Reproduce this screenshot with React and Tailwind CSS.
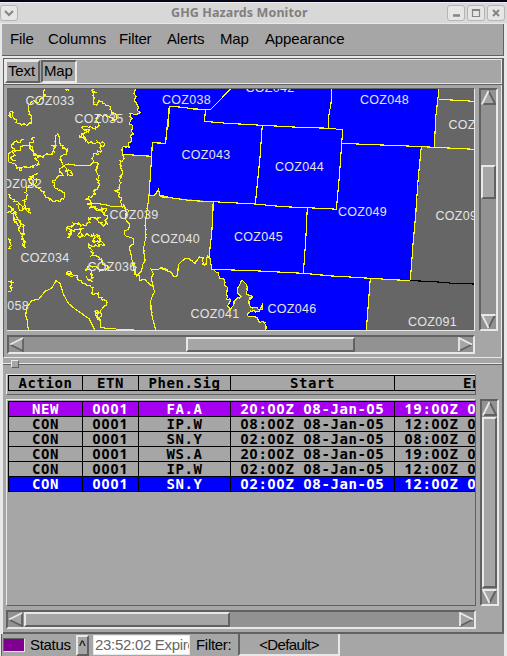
import React from "react";

/* ---------- map geometry ---------- */

// Points are digitised at a third of a pixel, relative to a tile origin.
const at = (ox, oy, s) =>
  s.trim().split(/\s+/).map((p) => {
    const [x, y] = p.split(",").map(Number);
    return [ox + x / 3, oy + y / 3];
  });

// Roughens a line so that ridge and river borders look surveyed.
const rough = (pts, amp = 1.3) => {
  const out = [pts[0]];
  let k = 7;
  for (let i = 1; i < pts.length; i++) {
    const [ax, ay] = pts[i - 1];
    const [bx, by] = pts[i];
    const n = Math.max(1, Math.round(Math.hypot(bx - ax, by - ay) / 1.6));
    for (let j = 1; j <= n; j++) {
      k = (k * 73 + 41) % 997;
      const e = j === n ? 0 : ((k % 100) / 50 - 1) * amp;
      const f = j === n ? 0 : (((k >> 2) % 100) / 50 - 1) * amp;
      out.push([ax + ((bx - ax) * j) / n + e, ay + ((by - ay) * j) / n + f]);
    }
  }
  return out;
};

const str = (pts) => pts.map(([x, y]) => `${x.toFixed(1)},${y.toFixed(1)}`).join(" ");

const westEdge = rough(
  at(0, 84, "401,12 407,18 402,30 408,38 403,48 410,60 415,70 412,78 420,85 408,92 390,88 390,97 396,103 388,120 398,125 397,145 400,150 392,155 394,170 385,180 388,190 370,187 367,195 367,211"),
  0.9
);
const southEdge = rough(
  at(160, 204, "155,196 175,205 178,222 192,225 195,245 203,250 200,285 213,288 203,308 212,318 222,298 230,285 243,277 235,270 234,250 240,240 248,230 258,240 262,252 260,270 277,278 265,290 268,302 278,312 290,310 300,318 307,298 308,315 290,322 272,320 262,335 290,340 297,353 316,355 316,380"),
  0.9
);

const blueArea = [
  ...westEdge,
  ...at(0, 84, "455,217 447,335 465,333 475,316 480,334 508,340"),
  [213.5, 201.5], [213, 210], [210, 253], [211.5, 269],
  ...southEdge,
  [366.5, 330], [370.5, 278.5], [410.5, 280.5], [412, 262], [417, 204], [421.5, 147], [434.5, 147.5], [436, 110], [439, 88],
];

const straight = [
  at(0, 84, "367,211 455,217 457,176 497,178 501,130 505,128 508,70"),
  at(0, 84, "455,217 447,335 465,333 475,316 480,334 508,340"),
  at(160, 84, "16,178 22,130 28,67 68,70 100,75 152,76 213,14"),
  at(160, 84, "137,76 133,112 200,118 307,124 400,129 508,133"),
  at(160, 84, "307,124 300,220 286,360"),
  at(160, 84, "0,338 45,343 95,350 160,353 286,360 370,368 510,374"),
  at(160, 84, "160,352 157,390"),
  at(320, 84, "35,14 33,60 27,90 25,133"),
  at(320, 84, "0,132 45,133 50,136 68,136 65,178 57,290 49,376 28,374"),
  at(320, 84, "65,178 130,181 263,186 343,190 463,196"),
  at(320, 84, "357,14 347,100 343,190"),
  at(320, 84, "357,46 410,49 463,52"),
  at(320, 84, "304,188 294,290 287,390"),
  at(320, 204, "290,0 280,110 271,230"),
  at(160, 204, "160,0 155,90 148,150 155,196 280,200 430,208 510,215"),
  at(160, 204, "442,12 437,110 430,210"),
  at(320, 204, "0,214 75,218 150,223 271,230"),
  at(320, 204, "151,223 145,300 139,378"),
  at(0, 204, "85,378 82,350 77,335 80,310 95,290 117,285 135,262 155,253 168,230 180,238 190,270 205,298 225,315 250,332 268,345 278,365 284,378"),
  at(0, 204, "300,345 302,370 320,373 345,373 350,376 402,376"),
];

const jagged = [
  at(0, 84, "133,14 130,28 136,32 130,45 108,55 100,50 88,62 85,75 86,92 95,98 97,118 65,122 48,115 38,97 40,85 28,83 33,100 24,95"),
  at(0, 84, "195,14 200,22 207,18"),
  at(0, 84, "283,14 275,20 285,25 278,35 283,42 279,62 293,62 297,50 308,52 318,65 330,68 335,85 350,92 345,108 330,100 310,95 298,92 290,110 297,125 285,135 265,130 247,130 250,137 268,137 250,152 238,155 255,160 257,172 280,178 305,175 315,180 300,190 302,205 285,207 278,222 280,235 272,245"),
  at(0, 84, "190,245 185,235 187,215 200,210 203,195 187,192 182,180 178,160 172,150 166,157 168,185 160,195 160,212 140,210 130,220 118,215 110,212 100,205 98,190 90,185 100,175 95,165 105,160"),
  at(0, 84, "70,165 60,175 50,170 40,180 35,190 45,195 30,205 25,215 28,235 45,240 50,250 65,258 70,247 100,250 112,245 115,232 105,225 118,218 100,210 95,200 90,188 75,185 62,195 40,205 45,215 30,222 48,230"),
  at(0, 84, "190,245 180,262 190,275 170,280 158,290 162,305 180,318 195,330 190,345 178,352 150,348 135,335 120,315 105,305 110,285 95,280 100,300 85,310 75,325 80,345 70,350 75,365 88,375 92,388"),
  at(0, 84, "190,245 200,258 215,262 218,275 205,272 195,258"),
  at(0, 84, "113,268 100,280 85,285 95,300"),
  at(0, 84, "280,235 295,240 290,262 297,275 290,285 298,300 293,315 280,320 285,330 272,340 260,345 275,358 285,372 300,378 315,388"),
  at(0, 84, "24,330 35,345 55,355 70,368 80,378"),
  at(0, 84, "24,365 35,375 50,388"),
  at(0, 84, "367,211 372,225 362,238 367,260 360,278 363,295 357,318 345,320 358,325 362,355 372,368 388,385"),
  at(0, 204, "24,5 40,15 50,40 62,55 58,80 70,90 65,105 75,115 75,130 68,100 72,75 60,50 45,45 55,65 45,55 40,35 28,22 24,28"),
  at(0, 204, "50,0 65,20 75,12 88,27"),
  at(0, 204, "24,105 33,108 35,125 30,133 24,133"),
  at(0, 204, "24,233 42,236 35,243 35,260 24,262"),
  at(0, 204, "262,0 275,5 268,12 285,10 290,18 305,12 320,18 310,28 322,35 315,50 322,60 310,65 300,55 292,48 300,40 283,45 265,42 270,55 258,65 235,60 205,68 200,75 215,78 205,100 212,85 225,75 252,72 235,90 240,100 258,92 300,97 302,105 292,98 280,105 275,112 308,115 310,125 265,122 267,132 278,140 275,155 290,158 305,165 308,180 322,185 320,195 300,200 290,190 262,188 258,195 275,200 270,212 278,222 265,228 258,218"),
  at(0, 204, "198,207 215,205 217,212 200,211 225,215 245,230 258,243 278,252 280,272 295,268 305,285 322,295 320,305 308,312 305,330 298,345 292,335 300,325 287,320 290,340 302,350"),
];

const gentle = [
  at(0, 84, "272,245 230,244 205,240 190,245"),
  at(0, 84, "275,358 295,359 330,366 372,368"),
  at(0, 204, "370,0 380,25 376,45 388,60 386,75 374,80 376,95 400,105 400,120 388,130 392,150 397,170 400,190 410,215 425,200 435,165 430,130 438,100 436,60 443,5 447,-25"),
  at(0, 204, "400,175 408,190 404,212 418,214 418,230 435,225 445,237 460,250 455,225 460,210 454,196 475,197 480,192 505,196"),
  at(160, 204, "0,193 10,196 20,200 33,205 40,216 50,218 57,180 75,163 90,166 105,178 118,158 130,160 128,182 138,182 143,155 150,165"),
  at(0, 204, "460,250 463,265 452,290 453,315 458,340 466,378"),
];

const labels = [
  ["COZ033", 25.5, 105], ["COZ035", 74.5, 123], ["COZ032", -7, 188], ["COZ034", 20.5, 262],
  ["COZ039", 109.5, 219], ["COZ036", 87.5, 271], ["COZ058", -20, 310], ["COZ040", 151, 243],
  ["COZ041", 190.5, 318], ["COZ045", 234, 241], ["COZ046", 267.5, 313], ["COZ043", 181.5, 159],
  ["COZ044", 275, 171], ["COZ038", 162, 104], ["COZ042", 245.5, 92], ["COZ048", 360, 104],
  ["COZ090", 448.5, 129], ["COZ049", 338, 216], ["COZ092", 435.5, 220], ["COZ091", 408, 326],
];

function HazardMap() {
  return (
    <svg viewBox="7 89 467 241" className="block h-[241px] w-[467px] bg-[#666666]" shapeRendering="crispEdges">
      <polygon points={str(blueArea)} fill="#0000ff" />
      <g fill="none" stroke="#ffff00" strokeWidth="1.15">
        {straight.map((l, i) => <polyline key={`s${i}`} points={str(l)} />)}
        {jagged.map((l, i) => <polyline key={`j${i}`} points={str(rough(l, 1.7))} />)}
        {gentle.map((l, i) => <polyline key={`g${i}`} points={str(rough(l, 0.5))} />)}
        <polyline points={str(westEdge)} />
        <polyline points={str(southEdge)} />
      </g>
      <polyline points="410.5,280.5 438,282 455,283.5 474,284" fill="none" stroke="#000" strokeWidth="1.15" />
      <g className="font-['Liberation_Sans',Arial,sans-serif] text-[12.5px]" fill="#e4e4e4">
        {labels.map(([t, x, y]) => (
          <text key={t} x={x} y={y} textLength="48.5">{t}</text>
        ))}
      </g>
    </svg>
  );
}

/* ---------- widgets ---------- */

const RAISED = "border-t-[#e8e8e8] border-l-[#e8e8e8] border-b-[#616161] border-r-[#616161]";
const SUNKEN = "border-t-[#616161] border-l-[#616161] border-b-[#e8e8e8] border-r-[#e8e8e8]";

function Arrow({ dir }) {
  const shape = {
    up: { fill: "7.5,1 14.5,14.5 0.5,14.5", light: "M0.8 14.5 L7.5 1", dark: "M7.5 1 L14.2 14 H0.8" },
    down: { fill: "0.5,0.5 14.5,0.5 7.5,14", light: "M14.5 1 H1 L7.5 14", dark: "M7.5 14 L14 1" },
    left: { fill: "0.5,7.5 14.5,0.5 14.5,14", light: "M1 7.5 L14 1", dark: "M14 1 V14 L1 7.5" },
    right: { fill: "0.5,0.5 14.5,7.5 0.5,14", light: "M14 7.5 L1 1 V14", dark: "M1 14 L14 7.5" },
  }[dir];
  return (
    <svg viewBox="0 0 15 15" className="block h-[15px] w-[15px] shrink-0">
      <polygon points={shape.fill} fill="#a6a6a6" />
      <path d={shape.dark} fill="none" stroke="#616161" strokeWidth="1.8" />
      <path d={shape.light} fill="none" stroke="#e8e8e8" strokeWidth="1.8" />
    </svg>
  );
}

function VScroll({ className, thumb }) {
  return (
    <div className={`flex w-[19px] flex-col border-2 bg-[#929292] ${SUNKEN} ${className}`}>
      <Arrow dir="up" />
      <div className={`w-[15px] shrink-0 border-2 bg-[#a6a6a6] ${RAISED} ${thumb}`} />
      <div className="mt-auto"><Arrow dir="down" /></div>
    </div>
  );
}

function HScroll({ className, thumb }) {
  return (
    <div className={`flex h-[19px] border-2 bg-[#929292] ${SUNKEN} ${className}`}>
      <Arrow dir="left" />
      <div className={`h-[15px] shrink-0 border-2 bg-[#a6a6a6] ${RAISED} ${thumb}`} />
      <div className="ml-auto"><Arrow dir="right" /></div>
    </div>
  );
}

// Digits come from a face with a plain zero, spaced to the same 9px pitch.
function Mono({ children }) {
  return children.split(/(\d+)/).filter(Boolean).map((run, i) =>
    /\d/.test(run) ? (
      <span key={i} className="font-['Noto_Sans',sans-serif] text-[14px] tracking-[0.99px]">{run}</span>
    ) : (
      <span key={i}>{run}</span>
    )
  );
}

const COLS = ["w-[74px]", "w-[56px]", "w-[92px]", "w-[164px]", "w-[164px]"];

function Row({ cells, className }) {
  return (
    <div className={`flex h-[15px] w-max border-l border-black font-['DejaVu_Sans_Mono',monospace] text-[14px] font-bold leading-[14px] tracking-[0.57px] ${className}`}>
      {cells.map((c, i) => (
        <div key={i} className={`h-[15px] shrink-0 overflow-hidden whitespace-pre border-r border-b border-black text-center ${COLS[i]}`}>
          <Mono>{c}</Mono>
        </div>
      ))}
    </div>
  );
}

const rows = [
  ["NEW", "0001", "FA.A", "20:00Z 08-Jan-05", "19:00Z 09-Jan-05"],
  ["CON", "0001", "IP.W", "08:00Z 08-Jan-05", "12:00Z 08-Jan-05"],
  ["CON", "0001", "SN.Y", "02:00Z 08-Jan-05", "08:00Z 08-Jan-05"],
  ["CON", "0001", "WS.A", "20:00Z 08-Jan-05", "19:00Z 09-Jan-05"],
  ["CON", "0001", "IP.W", "02:00Z 08-Jan-05", "12:00Z 08-Jan-05"],
  ["CON", "0001", "SN.Y", "02:00Z 08-Jan-05", "12:00Z 08-Jan-05"],
];
const rowTone = ["bg-[#a600f0] text-white", "", "", "", "", "bg-[#0000ff] text-white"];

function TitleButton({ children }) {
  return (
    <div className="flex h-4 w-[18px] items-center justify-center rounded-[3px] border border-[#b5b5b5] bg-[#e6e6e6]">
      <svg viewBox="0 0 10 10" className="h-2.5 w-2.5" fill="none" stroke="#858585" strokeWidth="2">{children}</svg>
    </div>
  );
}

const menus = [
  ["File", "w-[38px]"], ["Columns", "w-[71px]"], ["Filter", "w-[48px]"],
  ["Alerts", "w-[53px]"], ["Map", "w-[45px]"], ["Appearance", "w-[90px]"],
];

export default function App() {
  return (
    <div className="flex h-[656px] w-[507px] flex-col overflow-hidden bg-[#a6a6a6] font-['Liberation_Sans',Arial,sans-serif] text-[15px] tracking-[-0.15px] text-black">
      <div className="h-0.5 shrink-0 bg-[#05051a]" />
      <div className="flex h-[21px] shrink-0 items-center border-t border-[#eeeeee] bg-[#d8d8d8]">
        <TitleButton><path d="M1 3 L5 7 L9 3" /></TitleButton>
        <div className="flex-1 pl-[153px] font-['Noto_Sans',sans-serif] text-[12.5px] font-bold leading-5 tracking-[0.1px] whitespace-nowrap text-[#808080]">GHG Hazards Monitor</div>
        <div className="mr-[2px] flex gap-0.5">
          <TitleButton><path d="M2 7.5 H9" strokeWidth="2.5" /></TitleButton>
          <TitleButton><path d="M1.5 1.5 H8.5 V8.5 H1.5 Z M1 2.5 H9" strokeWidth="1.2" /></TitleButton>
          <TitleButton><path d="M2 2 L8 8 M8 2 L2 8" /></TitleButton>
        </div>
      </div>
      <div className="h-px shrink-0 bg-[#e8e8e8]" />

      <div className="flex h-[34px] shrink-0 border-b-2 border-l-2 border-r-3 border-[#e8e8e8]">
        <div className="flex flex-1 items-start border-r border-b border-[#616161] pl-2 leading-[29px]">
          {menus.map(([m, w]) => <div key={m} className={`shrink-0 ${w}`}>{m}</div>)}
        </div>
      </div>

      <div className="h-[576px] shrink-0 border-l-3 border-r-3 border-[#e8e8e8]">
        <div className="flex h-[576px] flex-col border-r-2 border-b-2 border-[#616161]">
          <div className="h-[27px] shrink-0 border-y border-l border-[#616161]">
            <div className="flex h-[25px] gap-px border border-[#e8e8e8]">
              <div className={`h-[23px] w-[35px] border-2 ${RAISED} pl-px leading-[18px]`}>Text</div>
              <div className={`h-[23px] w-9 border-2 ${SUNKEN} pl-px leading-[18px]`}>Map</div>
            </div>
          </div>

          <div className="flex h-[273px] shrink-0 flex-col border-l border-r border-b border-l-[#616161] border-r-[#e8e8e8] border-b-[#e8e8e8] pt-[3px] pl-[3px]">
            <div className="flex gap-1">
              <div className="h-[243px] w-[468px] border-t border-r border-b border-t-[#616161] border-r-[#e8e8e8] border-b-[#e8e8e8]">
                <HazardMap />
              </div>
              <VScroll className="h-[243px]" thumb="mt-[60px] h-[34px]" />
            </div>
            <HScroll className="mt-1 w-[468px]" thumb="ml-[162px] w-[169px]" />
          </div>

          <div className="relative mt-[5px] h-0.5 shrink-0 border-t border-b border-t-[#e8e8e8] border-b-[#616161]">
            <div className={`absolute -top-1 left-2 h-2 w-2 border bg-[#a6a6a6] ${RAISED}`} />
          </div>

          <div className={`ml-[3px] mt-[9px] h-[21px] w-[470px] shrink-0 overflow-hidden border pl-px ${RAISED}`}>
            <div className="h-4 border-t border-black">
              <Row cells={["Action", "ETN", "Phen.Sig", "Start", "End"]} className="" />
            </div>
          </div>

          <div className="ml-[3px] mt-1 flex shrink-0 gap-1">
            <div className={`h-[207px] w-[470px] overflow-hidden border pt-px pl-px ${RAISED}`}>
              <div className="border-t border-black">
                {rows.map((r, i) => <Row key={i} cells={r} className={rowTone[i]} />)}
              </div>
            </div>
            <VScroll className="h-[207px]" thumb="mt-px h-[171px]" />
          </div>
          <HScroll className="ml-[3px] mt-1 w-[470px] shrink-0" thumb="ml-px w-[206px]" />
        </div>
      </div>

      <div className="flex h-[22px] shrink-0 border-l border-r-3 border-[#e8e8e8]">
        <div className="flex flex-1 border-l border-[#616161] pl-px">
          <div className={`mt-[4px] h-[14px] w-[22px] border ${SUNKEN} bg-[#800090]`} />
          <div className="w-[51px] pl-[5px] leading-[22px] tracking-[-0.3px]">Status</div>
          <div className={`mt-px h-[21px] w-[13px] border-2 ${RAISED} pl-px text-[14px] leading-[19px]`}>^</div>
          <div className="ml-1 mt-px h-[20px] w-[97px] overflow-hidden border border-[#e8e8e8] bg-white pl-px leading-[18px] tracking-[-0.3px] whitespace-nowrap text-[#666666]">23:52:02 Expired</div>
          <div className="w-[48px] pl-[6px] leading-[22px] tracking-[-0.3px]">Filter:</div>
          <div className="h-[22px] w-[102px] border-2 border-t-0 border-l-[#616161] border-r-[#e8e8e8] border-b-[#e8e8e8] text-center leading-[22px] tracking-[-0.6px]">&lt;Default&gt;</div>
        </div>
      </div>
    </div>
  );
}
